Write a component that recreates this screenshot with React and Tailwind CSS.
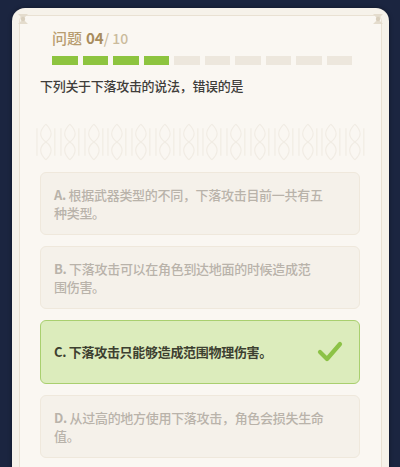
import React from "react";

const font = { fontFamily: '"Noto Sans CJK SC", "Noto Sans", sans-serif' };

function Corner({ flip }) {
  return (
    <svg width="14" height="14" viewBox="0 0 14 14" className={flip ? "scale-x-[-1]" : ""}>
      <path d="M2 2 L12 2 L7 7 L12 12 L2 12 L7 7 Z" fill="#e4dccd" />
      <circle cx="7" cy="7" r="2.2" fill="#d9cfbd" />
    </svg>
  );
}

function Pattern() {
  const items = Array.from({ length: 14 });
  return (
    <div className="h-[40px] mx-[-6px] flex justify-between overflow-hidden">
      {items.map((_, i) => (
        <svg key={i} width="24" height="40" viewBox="0 0 24 40">
          <g fill="none" stroke="#f1ece4" strokeWidth="1.2">
            <path d="M12 2 C5 9 5 15 12 20 C19 25 19 31 12 38" />
            <path d="M12 2 C19 9 19 15 12 20 C5 25 5 31 12 38" />
            <path d="M3 6 L3 34" />
            <path d="M21 6 L21 34" />
          </g>
        </svg>
      ))}
    </div>
  );
}

function Option({ children, selected }) {
  if (selected) {
    return (
      <div className="h-[64px] rounded-[6px] border border-[#a9cf6f] bg-[#dcecbc] flex items-center justify-between pl-[13px] pr-[16px]">
        <div className="text-[13px] tracking-[-0.3px] leading-[18px] font-bold text-[#3d4030]">{children}</div>
        <svg width="26" height="24" viewBox="0 0 26 24">
          <polyline points="3,12 10,19 23,4" fill="none" stroke="#8cc246" strokeWidth="4.2" strokeLinecap="round" strokeLinejoin="round" />
        </svg>
      </div>
    );
  }
  return (
    <div className="h-[63px] rounded-[6px] border border-[#efe8dc] bg-[#f5f1ea] flex items-center pl-[13px] pr-[16px]">
      <div className="text-[13px] tracking-[-0.3px] leading-[18px] font-medium text-[#b9b3aa]">{children}</div>
    </div>
  );
}

export default function App() {
  const segs = Array.from({ length: 10 });
  return (
    <div className="w-[400px] h-[467px] overflow-hidden bg-[#1b2540] pt-[8px]" style={font}>
      <div className="ml-[12px] w-[377px] h-[480px] rounded-t-[13px] bg-[#f6f2ea] p-[7px] pb-0 shadow-[0_0_4px_rgba(0,0,0,0.4)]">
        <div className="relative h-full rounded-t-[6px] border border-b-0 border-[#e9e1d3] bg-[#faf7f2] px-[20px] pt-[11px]">
          <div className="absolute left-[-4px] top-[-4px]"><Corner /></div>
          <div className="absolute right-[-4px] top-[-4px]"><Corner flip /></div>

          <div className="ml-[12px] h-[22px] flex items-end leading-[22px]">
            <span className="text-[15px] font-medium text-[#b89d70]">问题</span>
            <span className="ml-[4px] text-[15px] font-bold text-[#a88c5c]">04</span>
            <span className="text-[14px] font-medium text-[#cbbb9c]">/ 10</span>
          </div>

          <div className="ml-[12px] mt-[7px] w-[300px] grid grid-cols-10 gap-[5px]">
            {segs.map((_, i) => (
              <div key={i} className={i < 4 ? "h-[9px] bg-[#8dc43f]" : "h-[9px] bg-[#ede7dd]"} />
            ))}
          </div>

          <div className="mt-[12px] text-[13px] tracking-[-0.3px] leading-[17px] font-medium text-[#3f3d3a]">
            下列关于下落攻击的说法，错误的是
          </div>

          <div className="mt-[28px]">
            <Pattern />
          </div>

          <div className="mt-[10px] w-[320px] flex flex-col gap-[11px]">
            <Option>
              <span className="font-bold">A.</span> 根据武器类型的不同，下落攻击目前一共有五
              <br />
              种类型。
            </Option>
            <Option>
              <span className="font-bold">B.</span> 下落攻击可以在角色到达地面的时候造成范
              <br />
              围伤害。
            </Option>
            <Option selected>C. 下落攻击只能够造成范围物理伤害。</Option>
            <Option>
              <span className="font-bold">D.</span> 从过高的地方使用下落攻击，角色会损失生命
              <br />
              值。
            </Option>
          </div>
        </div>
      </div>
    </div>
  );
}
